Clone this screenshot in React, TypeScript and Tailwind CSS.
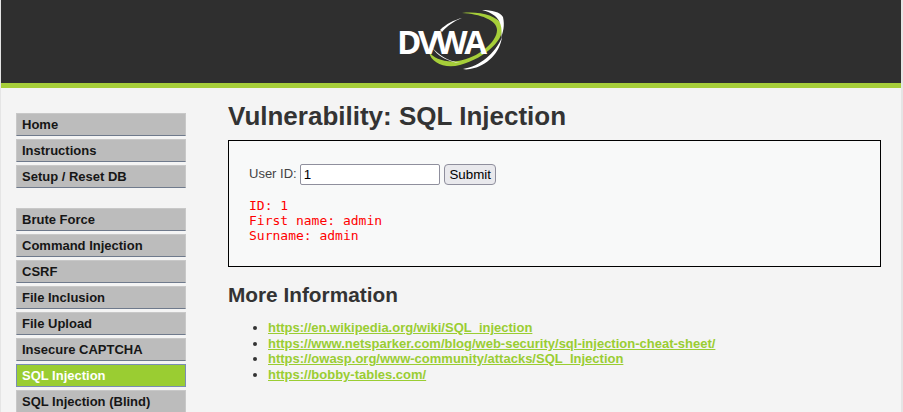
const menuTop = ['Home', 'Instructions', 'Setup / Reset DB'];
const menuVuln = [
  'Brute Force',
  'Command Injection',
  'CSRF',
  'File Inclusion',
  'File Upload',
  'Insecure CAPTCHA',
  'SQL Injection',
  'SQL Injection (Blind)',
];
const links = [
  'https://en.wikipedia.org/wiki/SQL_injection',
  'https://www.netsparker.com/blog/web-security/sql-injection-cheat-sheet/',
  'https://owasp.org/www-community/attacks/SQL_Injection',
  'https://bobby-tables.com/',
];

// the viewBox uses page coordinates so the swooshes are easy to compare with the reference
function Logo() {
  return (
    <div className="relative w-[115px] h-[70px]">
      <svg className="absolute inset-0" width="115" height="70" viewBox="395 5 115 70">
        <path d="M462 13 C478 11 497 15 502 25 C506 38 486 58 460 65 C445 69 431 63 429 52 C433 58 445 63 458 61 C478 58 497 42 497 30 C497 20 480 14 462 13 Z" fill="#a6ce39" />
        <path d="M482 10 C492 10 500 12 503 17 C505 26 503 32 501 38 C503 28 500 20 495 16 C491 13 487 11 482 10 Z" fill="#ffffff" />
        <path d="M463 69 C480 66 495 54 502 37 C500 52 488 66 470 69 C467 69.5 465 69.5 463 69 Z" fill="#ffffff" />
        <path d="M440 30 C446 24 454 20 462 18 C454 21 447 26 442 32 Z" fill="#ffffff" />
        <path d="M432 47 C438 55 448 61 460 63 C448 62 437 56 432 47 Z" fill="#ffffff" />
      </svg>
      <span className="absolute left-[2px] top-[17px] font-['Open_Sans',sans-serif] font-bold text-[33px] leading-[40px] tracking-[-3.5px] text-white">
        DVWA
      </span>
    </div>
  );
}

function MenuItem({ label }: { label: string }) {
  const active = label === 'SQL Injection';
  return (
    <li
      className={
        active
          ? 'h-[23px] mb-[3px] pl-[5px] pt-[2px] border border-[#7a8db5] bg-[#9acd32] text-[13px] leading-[17px] font-bold text-white'
          : 'h-[23px] mb-[3px] pl-[5px] pt-[2px] border border-[#c8c8c8] border-b-[#6f7a8c] bg-[#bcbcbc] text-[13px] leading-[17px] font-bold text-[#161616]'
      }
    >
      {label}
    </li>
  );
}

export default function App() {
  return (
    <div className="h-[412px] overflow-hidden bg-[#e5e5e5] pl-[1px] pr-[2px] font-['Liberation_Sans',Arial,sans-serif]">
      <div className="h-[83px] bg-[#2f2f2f] flex justify-center pt-[5px]">
        <div className="ml-[3px]">
          <Logo />
        </div>
      </div>
      <div className="h-[5px] bg-[#a6ce39]" />
      <div className="h-[324px] bg-[#f4f4f4] flex">
        <div className="w-[227px] shrink-0 pl-[15px] pt-[25px]">
          <ul className="w-[170px]">
            {menuTop.map((m) => (
              <MenuItem key={m} label={m} />
            ))}
          </ul>
          <ul className="w-[170px] mt-[20px]">
            {menuVuln.map((m) => (
              <MenuItem key={m} label={m} />
            ))}
          </ul>
        </div>
        <div className="w-[653px] text-[#333333]">
          <h1 className="mt-[13px] text-[26px] leading-[30px] font-bold text-[#333333]">
            Vulnerability: SQL Injection
          </h1>
          <div className="mt-[9px] h-[127px] border border-black bg-[#f8f9f9] pl-[20px] pt-[23px]">
            <div className="flex h-[21px] text-[13px] leading-[20px] text-[#444444]">
              <span>User ID:</span>
              <input
                readOnly
                value="1"
                className="ml-[3px] w-[140px] h-[21px] px-[3px] bg-white border border-[#8f8f9d] rounded-[2px] text-[13.33px] text-black outline-none"
              />
              <button className="ml-[4px] w-[52px] h-[21px] pl-[1px] bg-[#e9e9ed] border border-[#8f8f9d] rounded-[4px] text-[13.33px] text-black">
                Submit
              </button>
            </div>
            <pre className="mt-[13px] font-['DejaVu_Sans_Mono',monospace] text-[13px] leading-[15px] text-[#ff0000]">
              {'ID: 1\nFirst name: admin\nSurname: admin'}
            </pre>
          </div>
          <h2 className="mt-[16px] mb-[14px] text-[20.8px] leading-[23px] font-bold text-[#333333]">
            More Information
          </h2>
          <ul className="pl-[40px] list-disc text-[13px] leading-[15.6px] text-[#333333]">
            {links.map((l) => (
              <li key={l}>
                <a href={l} className="font-bold text-[#9acd32] underline">
                  {l}
                </a>
              </li>
            ))}
          </ul>
        </div>
      </div>
    </div>
  );
}
